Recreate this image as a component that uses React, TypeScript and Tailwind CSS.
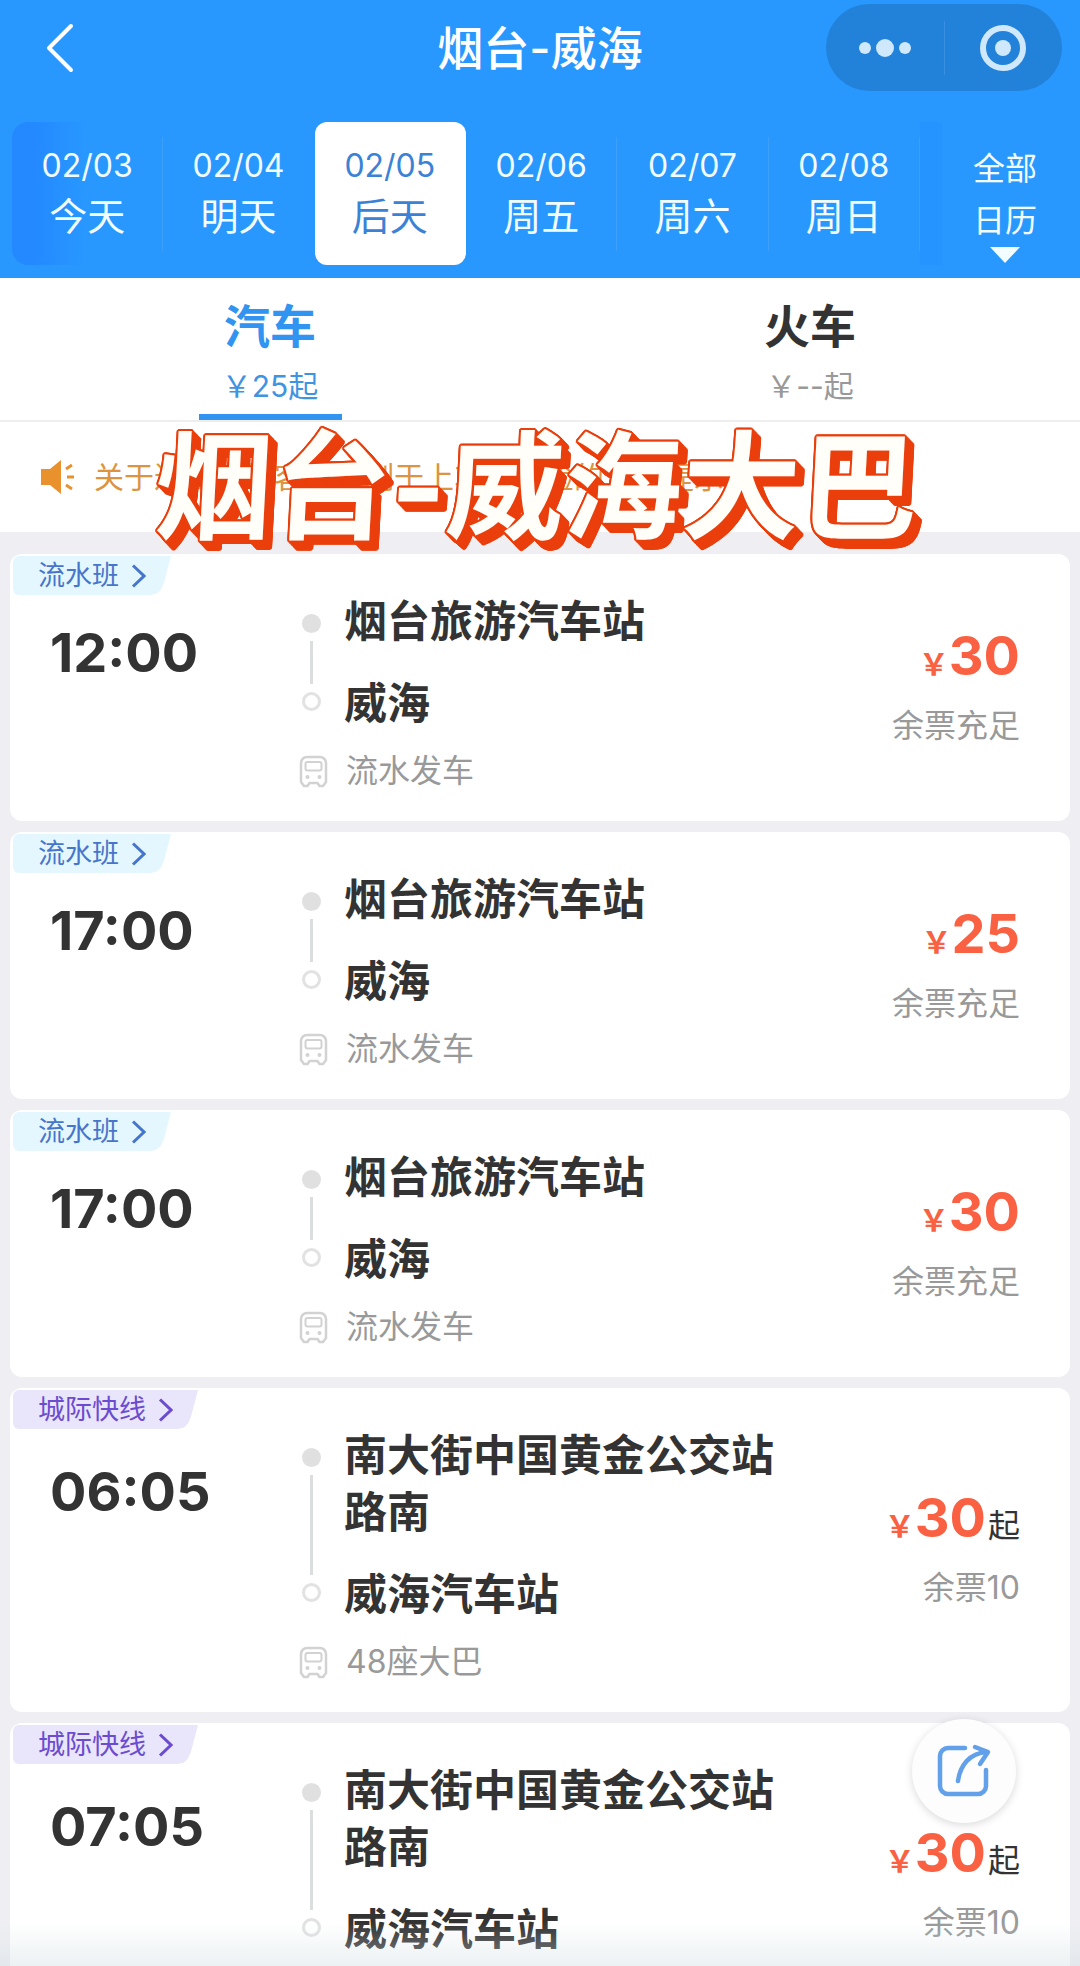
import { useState } from 'react';
import { clsx } from 'clsx';

const DATES = [
  { date: '02/03', label: '今天' },
  { date: '02/04', label: '明天' },
  { date: '02/05', label: '后天' },
  { date: '02/06', label: '周五' },
  { date: '02/07', label: '周六' },
  { date: '02/08', label: '周日' }
];

const MODES = [
  { name: '汽车', price: '￥25起' },
  { name: '火车', price: '￥--起' }
];

type Trip = {
  kind: 'flow' | 'express';
  time: string;
  from: string;
  to: string;
  vehicle: string;
  price: number;
  priceFrom?: boolean;
  stock: string;
};

const TRIPS: Trip[] = [
  { kind: 'flow', time: '12:00', from: '烟台旅游汽车站', to: '威海', vehicle: '流水发车', price: 30, stock: '余票充足' },
  { kind: 'flow', time: '17:00', from: '烟台旅游汽车站', to: '威海', vehicle: '流水发车', price: 25, stock: '余票充足' },
  { kind: 'flow', time: '17:00', from: '烟台旅游汽车站', to: '威海', vehicle: '流水发车', price: 30, stock: '余票充足' },
  { kind: 'express', time: '06:05', from: '南大街中国黄金公交站路南', to: '威海汽车站', vehicle: '48座大巴', price: 30, priceFrom: true, stock: '余票10' },
  { kind: 'express', time: '07:05', from: '南大街中国黄金公交站路南', to: '威海汽车站', vehicle: '48座大巴', price: 30, priceFrom: true, stock: '余票10' }
];

// ring of shadows around the glyphs, moved down-right by `shift`
function ring(radius: number, color: string, shift = 0) {
  return Array.from({ length: 16 }, (_, i) => {
    const a = (i * Math.PI) / 8;
    const x = (Math.cos(a) * radius + shift).toFixed(1);
    const y = (Math.sin(a) * radius + shift).toFixed(1);
    return `${x}px ${y}px 0 ${color}`;
  });
}

const BANNER_SHADOW = [0, 2, 4, 6, 8].flatMap((shift) => ring(2, '#ea3f0d', shift)).join(', ');

function Header() {
  return (
    <header className="grid h-[95px] grid-cols-[1fr_auto_1fr] items-center px-[18px] text-white">
      <button type="button" aria-label="返回" className="justify-self-start pl-[18px]">
        <svg width="48" height="52" viewBox="0 0 48 52" fill="none" stroke="currentColor" strokeWidth="4">
          <path d="M35 4 13 26l22 22" strokeLinecap="round" strokeLinejoin="round" />
        </svg>
      </button>
      <h1 className="text-[46px] leading-[60px] font-medium">烟台-威海</h1>
      <div className="flex h-[87px] w-[236px] items-center justify-self-end rounded-full bg-[#2282d9] text-[#cfe8fc]">
        <button type="button" aria-label="更多" className="flex h-full flex-1 items-center justify-center">
          <svg width="52" height="20" viewBox="0 0 52 20" fill="currentColor">
            <circle cx="6" cy="10" r="6" />
            <circle cx="26" cy="10" r="9" />
            <circle cx="46" cy="10" r="6" />
          </svg>
        </button>
        <span className="h-[54px] w-px bg-[#3a90e0]" />
        <button type="button" aria-label="关闭" className="flex h-full flex-1 items-center justify-center">
          <svg width="48" height="48" viewBox="0 0 48 48" fill="none">
            <circle cx="24" cy="24" r="20" stroke="currentColor" strokeWidth="6" />
            <circle cx="24" cy="24" r="8" fill="currentColor" />
          </svg>
        </button>
      </div>
    </header>
  );
}

function DateBar() {
  const [active, setActive] = useState(2);

  return (
    <div className="flex items-stretch pt-[27px] pb-[13px] pl-[12px] text-[#f2fdff]">
      <div className="flex h-[143px] flex-1 rounded-2xl bg-linear-to-r from-[#2488ff] from-2% to-[#2898ff] to-8%">
        {DATES.map((d, i) => (
          <button
            key={d.date}
            type="button"
            onClick={() => setActive(i)}
            className={clsx(
              'flex flex-1 items-center rounded-xl',
              active === i && 'bg-white text-[#3b82d6]'
            )}
          >
            <span className="flex flex-1 flex-col items-center pb-[6px]">
              <span className="text-[32px] leading-[50px]">{d.date}</span>
              <span className="text-[38px] leading-[50px]">{d.label}</span>
            </span>
            <span className={clsx('h-[114px] w-px', active === i || active === i + 1 ? 'bg-transparent' : 'bg-[#3c9ff8]')} />
          </button>
        ))}
        <span className="w-[22px] bg-[#2694ff]" />
      </div>
      <button type="button" className="flex w-[138px] flex-col items-center justify-end pr-[12px] text-[32px] leading-[52px]">
        <span>全部</span>
        <span>日历</span>
        <svg width="30" height="18" viewBox="0 0 30 18" fill="currentColor">
          <path d="M0 0h30L15 16z" />
        </svg>
      </button>
    </div>
  );
}

function ModeTabs() {
  const [active, setActive] = useState(0);

  return (
    <nav className="grid grid-cols-2 border-b-2 border-[#eeeeef] bg-white">
      {MODES.map((m, i) => (
        <button
          key={m.name}
          type="button"
          onClick={() => setActive(i)}
          className="flex flex-col items-center pt-[18px]"
        >
          <span className={clsx('text-[46px] leading-[60px] font-bold', active === i ? 'text-[#3094f0]' : 'text-[#333]')}>
            {m.name}
          </span>
          <span className={clsx('mt-2 text-[30px] leading-[44px]', active === i ? 'text-[#3f94e2]' : 'text-[#999]')}>
            {m.price}
          </span>
          <span className={clsx('mt-[6px] h-[6px] w-[143px]', active === i && 'bg-[#3094f0]')} />
        </button>
      ))}
    </nav>
  );
}

function Notice() {
  return (
    <div className="relative flex h-[110px] items-center gap-5 bg-white pl-[41px] text-[#dc9440]">
      <svg width="33" height="34" viewBox="0 0 33 34" className="shrink-0" fill="#e8912d">
        <path d="M0 9h9L20 0v34L9 25H0z" />
        <path d="M25 9l6-4M26 17h7M25 25l6 4" stroke="#e8912d" strokeWidth="3" fill="none" />
      </svg>
      <p className="text-[30px] leading-[40px] whitespace-nowrap">关于进出站旅客实名制于上车前查验的温馨提示</p>
      <p
        className="absolute top-0 left-[155px] -skew-x-3 text-[118px] leading-[130px] font-bold whitespace-nowrap text-[#fffef8]"
        style={{ textShadow: BANNER_SHADOW }}
      >
        烟台-威海大巴
      </p>
    </div>
  );
}

function BusIcon() {
  return (
    <svg width="29" height="33" viewBox="0 0 29 33" fill="none" stroke="#d2d2d2" strokeWidth="2.5">
      <path d="M8 2h13a6 6 0 0 1 6 6v19l-3 4h-3.500l-2-3h-8l-2 3H5l-3-4V8a6 6 0 0 1 6-6z" strokeLinejoin="round" />
      <rect x="6.500" y="7" width="16" height="8.500" rx="2" strokeWidth="2" />
      <circle cx="8.500" cy="22" r="2" fill="#d2d2d2" stroke="none" />
      <circle cx="20.500" cy="22" r="2" fill="#d2d2d2" stroke="none" />
    </svg>
  );
}

function TripTag({ kind }: { kind: Trip['kind'] }) {
  return (
    <a
      href="#"
      className={clsx(
        'absolute top-[2px] left-[3px] flex h-[39px] items-center gap-[12px] rounded-l-md pr-[25px] pl-[25px] text-[27px] leading-[39px]',
        '[clip-path:polygon(0_0,100%_0,calc(100%-7px)_68%,calc(100%-10px)_86%,calc(100%-14px)_96%,calc(100%-20px)_100%,0_100%)]',
        kind === 'flow' ? 'bg-[#e5f7fe] text-[#4576cc]' : 'bg-[#e9e5fa] text-[#6b4bd0]'
      )}
    >
      {kind === 'flow' ? '流水班' : '城际快线'}
      <svg width="15" height="24" viewBox="0 0 15 24" fill="none" stroke="currentColor" strokeWidth="3">
        <path d="M2 1.500 13 12 2 22.500" />
      </svg>
    </a>
  );
}

function TripCard({ trip }: { trip: Trip }) {
  return (
    <li className="relative flex shrink-0 rounded-xl bg-white pr-[50px] pl-[40px] text-[#333]">
      <TripTag kind={trip.kind} />
      <time className={clsx('w-[249px] shrink-0 text-[54px] leading-[60px] font-bold', trip.kind === 'flow' ? 'pt-[69px]' : 'pt-[74px]')}>
        {trip.time}
      </time>
      <div className="flex flex-1 flex-col pt-[39px] pb-[30px]">
        <div className="flex">
          <div className="flex w-[45px] shrink-0 flex-col items-start pt-[21px] pb-[21px] pl-[3px]">
            <span className="size-[19px] rounded-full bg-[#e0e0e0]" />
            <span className="my-[8px] ml-[8px] w-[3px] flex-1 bg-[#dadedf]" />
            <span className="size-[19px] rounded-full border-3 border-[#e2e2e2]" />
          </div>
          <div className="flex flex-1 flex-col gap-[25px] text-[43px] leading-[57px] font-bold">
            <p>{trip.from}</p>
            <p>{trip.to}</p>
          </div>
        </div>
        <div className="mt-[19px] flex items-center gap-[18px] text-[32px] leading-[40px] text-[#999]">
          <BusIcon />
          {trip.vehicle}
        </div>
      </div>
      <div className="flex w-[232px] shrink-0 flex-col items-end justify-center gap-3 pb-1">
        <p className="flex items-baseline leading-[60px] text-[#fa6142]">
          <span className="text-[30px] font-bold">￥</span>
          <strong className="text-[54px] font-bold">{trip.price}</strong>
          {trip.priceFrom ? <span className="ml-[2px] text-[32px] text-[#333]">起</span> : null}
        </p>
        <p className="text-[32px] leading-[40px] text-[#999]">{trip.stock}</p>
      </div>
    </li>
  );
}

export default function App() {
  return (
    <main
      lang="zh-CN"
      className="relative flex h-screen flex-col overflow-hidden bg-[#efeff3] font-[Inter,'Noto_Sans_CJK_SC',sans-serif]"
    >
      <div className="bg-[#2898ff]">
        <Header />
        <DateBar />
      </div>
      <ModeTabs />
      <Notice />
      <ul className="flex flex-1 flex-col gap-[11px] overflow-y-auto px-[10px] pt-[22px] [scrollbar-width:none]">
        {TRIPS.map((trip, i) => (
          <TripCard key={i} trip={trip} />
        ))}
      </ul>
      <div className="pointer-events-none absolute inset-x-0 bottom-0 h-[44px] bg-linear-to-t from-[#d5e0e4]/45 to-transparent" />
      <button
        type="button"
        aria-label="分享"
        className="absolute right-[64px] bottom-[143px] flex size-[104px] items-center justify-center rounded-full bg-[#fdfdfe] shadow-[0_2px_8px_rgba(0,0,0,0.15)]"
      >
        <svg width="54" height="54" viewBox="0 0 54 54" fill="none" stroke="#62a0ea" strokeWidth="4.5">
          <path d="M28 4H11a8 8 0 0 0-8 8v30a8 8 0 0 0 8 8h30a8 8 0 0 0 8-8V26" strokeLinecap="round" />
          <path d="M21 37C23 22 32 9 50 8" strokeLinecap="round" />
          <path d="m38 3 13 5-8 12" strokeLinecap="round" strokeLinejoin="round" />
        </svg>
      </button>
    </main>
  );
}
